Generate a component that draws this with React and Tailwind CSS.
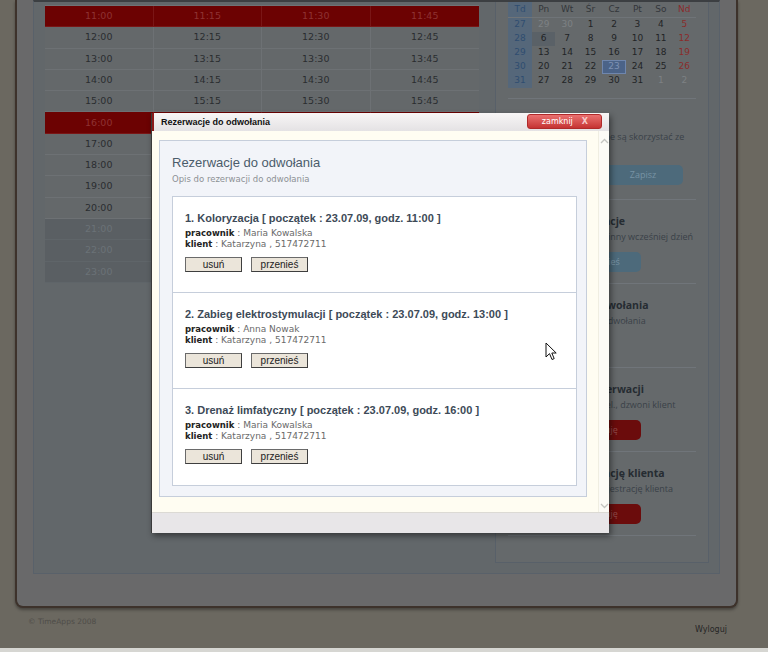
import React from 'react';

const rows = [
  { h: '11', k: 'red' },
  { h: '12', k: 'n' },
  { h: '13', k: 'n' },
  { h: '14', k: 'n' },
  { h: '15', k: 'n' },
  { h: '16', k: 'red' },
  { h: '17', k: 'n' },
  { h: '18', k: 'n' },
  { h: '19', k: 'n' },
  { h: '20', k: 'n' },
  { h: '21', k: 'g' },
  { h: '22', k: 'g' },
  { h: '23', k: 'g' },
];

const rowCls = {
  red: 'border-[#7a1616] bg-[#6c0202] text-[#8e3232]',
  n: 'border-[#6d7174] bg-[#64686a] text-[#2a2d30]',
  g: 'border-[#5f6569] bg-[#5a5f63] text-[#6b7277]',
};

const weeks = [
  { w: 27, d: [['29', 'o'], ['30', 'o'], ['1'], ['2'], ['3'], ['4'], ['5']] },
  { w: 28, d: [['6', 'sel'], ['7'], ['8'], ['9'], ['10'], ['11'], ['12']] },
  { w: 29, d: [['13'], ['14'], ['15'], ['16'], ['17'], ['18'], ['19']] },
  { w: 30, d: [['20'], ['21'], ['22'], ['23', 'today'], ['24'], ['25'], ['26']] },
  { w: 31, d: [['27'], ['28'], ['29'], ['30'], ['31'], ['1', 'o'], ['2', 'o']] },
];

const items = [
  { n: '1. Koloryzacja', time: '11:00', prac: 'Maria Kowalska' },
  { n: '2. Zabieg elektrostymulacji', time: '13:00', prac: 'Anna Nowak' },
  { n: '3. Drenaż limfatyczny', time: '16:00', prac: 'Maria Kowalska' },
];

function Calendar() {
  const heads = ['Pn', 'Wt', 'Śr', 'Cz', 'Pt', 'So', 'Nd'];
  return (
    <div className="grid w-[188px] grid-cols-[24px_repeat(7,1fr)] font-['DejaVu_Sans',Verdana,sans-serif] text-[9px] text-[#222426]">
      <div className="flex h-[16px] items-center justify-center border-b border-[#6f7478] bg-[#55677a] text-[#2f4d70]">Td</div>
      {heads.map((h, i) => (
        <div
          key={h}
          className={`flex h-[16px] items-center justify-center border-b border-[#6f7478] ${i === 6 ? 'text-[#8a2c2c]' : 'text-[#33363a]'}`}
        >
          {h}
        </div>
      ))}
      {weeks.map((wk) => (
        <React.Fragment key={wk.w}>
          <div className="flex h-[14px] items-center justify-center bg-[#55677a] text-[#2f4d70]">{wk.w}</div>
          {wk.d.map(([d, t], i) => {
            let cls = 'text-[#222426]';
            if (i === 6) cls = 'text-[#8a2c2c]';
            if (t === 'o') cls = 'text-[#7d8184]';
            if (t === 'sel') cls = 'bg-[#5a6167] text-[#222426]';
            if (t === 'today') cls = 'border border-[#6f86ad] bg-[#4b6388] text-[#7e92b4]';
            return (
              <div key={i} className={`flex h-[14px] items-center justify-center ${cls}`}>
                {d}
              </div>
            );
          })}
        </React.Fragment>
      ))}
    </div>
  );
}

function Section({ title, children }) {
  return (
    <div className="border-b border-[#70757a] pb-[11px] pt-[14px]">
      <div className="whitespace-nowrap text-[10.5px] font-bold leading-[14px] text-[#262c32]">{title}</div>
      {children}
    </div>
  );
}

function Desc({ children }) {
  return <div className="mt-[2px] whitespace-nowrap text-[9px] leading-[14px] text-[#3a4148]">{children}</div>;
}

function SideBtn({ red, children }) {
  return (
    <div
      className={`mx-auto mt-[8px] flex h-[20px] w-[78px] items-center justify-center rounded-[5px] text-[9px] ${red ? 'bg-[#6b0c0c] text-[#8f4a4a]' : 'bg-[#4d6a7b] text-[#7893a4]'}`}
    >
      {children}
    </div>
  );
}

function GreyBtn({ children }) {
  return (
    <div className="flex h-[15px] w-[57px] items-center justify-center border border-[#6a6a6a] border-b-[#3e3e3e] border-r-[#3e3e3e] bg-[#ebe5da] font-['Liberation_Sans',Arial,sans-serif] text-[10px] text-[#222]">
      {children}
    </div>
  );
}

function Chevron({ up }) {
  return (
    <svg width="9" height="6" viewBox="0 0 9 6">
      <path d={up ? 'M1 5 L4.5 1.5 L8 5' : 'M1 1 L4.5 4.5 L8 1'} fill="none" stroke="#c4c4c0" strokeWidth="1.3" />
    </svg>
  );
}

export default function App() {
  return (
    <div className="relative flex h-[652px] w-[768px] flex-col overflow-hidden bg-[#6b6860] font-['DejaVu_Sans',Verdana,sans-serif]">
      {/* outer frame */}
      <div className="ml-[15px] h-[608px] w-[723px] shrink-0 rounded-b-[8px] border-x-2 border-b-2 border-[#3d322b] bg-[#69696a] px-[16px] shadow-[0_2px_3px_rgba(0,0,0,0.35)]">
        <div className="flex h-[574px] border-x border-b border-[#59616a] border-t-2 border-t-[#3c3f42] bg-[#62676a] pl-[11px]">
          {/* left column: time table */}
          <div className="w-[434px] pt-[3px]">
            <div className="border-t border-[#6f7376]">
              {rows.map((r) => (
                <div key={r.h} className={`grid h-[21.3px] grid-cols-4 border-b ${rowCls[r.k]}`}>
                  {['00', '15', '30', '45'].map((m, j) => (
                    <div
                      key={m}
                      className={`flex items-center justify-center text-[9.5px] ${j < 3 ? (r.k === 'red' ? 'border-r border-[#7a1616]' : 'border-r border-[#6d7174]') : ''}`}
                    >
                      {r.h}:{m}
                    </div>
                  ))}
                </div>
              ))}
            </div>
          </div>

          {/* right sidebar */}
          <div className="ml-[16px] flex h-[561px] w-[214px] flex-col border-x border-b border-[#586069] bg-[#65696b] px-[12px] font-['Open_Sans',sans-serif]">
            <Calendar />
            <div className="mt-[10px] border-b border-[#70757a]" />
            <div className="border-b border-[#70757a] pb-[14px] pt-[14px]">
              <div className="whitespace-nowrap text-[10.5px] font-bold leading-[14px] text-[#262c32]">Nowa rezerwacja</div>
              <div className="mt-[2px] whitespace-nowrap text-[9px] leading-[15px] text-[#3a4148]">
                Osoby, które już zapisane są skorzystać ze
                <br />
                zniżki.
              </div>
              <div className="mt-[6px] flex items-center">
                <div className="h-[18px] w-[80px] border border-[#70757a] bg-[#6a6e70]" />
                <div className="ml-auto mr-[13px] flex h-[20px] w-[80px] items-center justify-center rounded-[5px] bg-[#4d6a7b] text-[9px] text-[#7893a4]">
                  Zapisz
                </div>
              </div>
            </div>
            <Section title="Przełożone rezerwacje">
              <Desc>Zmień termin wizyty na inny wcześniej dzień</Desc>
              <SideBtn>Przenieś</SideBtn>
            </Section>
            <Section title="Rezerwacje – do odwołania">
              <Desc>Lista rezerwacji już do odwołania</Desc>
              <div className="mt-[8px] h-[20px] text-[9px] leading-[20px] text-[#3a4148]">» pokaż</div>
            </Section>
            <Section title="Anulowanie tej rezerwacji">
              <Desc>Odwołanie rezerwacji: tel., dzwoni klient</Desc>
              <SideBtn red>Anuluję</SideBtn>
            </Section>
            <Section title="Zaakceptuj rejestrację klienta">
              <Desc>Możesz też anulować rejestrację klienta</Desc>
              <SideBtn red>Anuluję</SideBtn>
            </Section>
          </div>
        </div>
      </div>

      {/* footer */}
      <div className="flex h-[40px] shrink-0 justify-between">
        <div className="ml-[28px] mt-[9px] text-[7.5px] leading-[10px] text-[#4f4d49]">© TimeApps 2008</div>
        <div className="mr-[41px] mt-[17px] text-[8px] leading-[10px] text-[#262626]">Wyloguj</div>
      </div>
      <div className="h-[4px] shrink-0 bg-[#d6d6d2]" />

      {/* modal */}
      <div className="absolute left-[151px] top-[113px] flex h-[420px] w-[458px] flex-col border-l border-[#3a3a3a] bg-[#fffdf2] shadow-[2px_3px_6px_rgba(0,0,0,0.45)]">
        <div className="flex h-[18px] shrink-0 items-start justify-between border-l-2 border-[#8a1a1a] bg-gradient-to-b from-[#f8f6f6] to-[#e4e2e4] pl-[7px]">
          <div className="font-['Liberation_Sans',Arial,sans-serif] text-[9px] font-bold leading-[18px] text-[#111]">Rezerwacje do odwołania</div>
          <div className="mr-[7px] mt-[1px] flex h-[15px] w-[75px] items-center justify-end gap-[9px] rounded-[3px] border border-[#b02a2a] bg-gradient-to-b from-[#ea7070] to-[#c53232] pr-[13px] text-[8px] text-white">
            <span>zamknij</span>
            <span className="font-bold text-[#f5caca]">X</span>
          </div>
        </div>
        <div className="flex min-h-0 flex-1">
          <div className="flex-1 pl-[7px] pt-[9px]">
            <div className="h-[357px] w-[428px] border border-[#c6cedb] bg-[#f2f4f9] pl-[12px] pr-[9px] pt-[14px]">
              <div className="font-['Liberation_Sans',Arial,sans-serif] text-[13px] leading-[16px] text-[#4b5c6b]">Rezerwacje do odwołania</div>
              <div className="mt-[3px] text-[8.5px] leading-[11px] text-[#8d9195]">Opis do rezerwacji do odwołania</div>
              <div className="mt-[11px] w-[405px] border border-[#c6cedb] bg-white">
                {items.map((it, i) => (
                  <div key={i} className={`h-[96px] pl-[12px] pt-[14px] ${i < 2 ? 'border-b border-[#c6cedb]' : ''}`}>
                    <div className="font-['Liberation_Sans',Arial,sans-serif] text-[11px] font-bold leading-[14px] text-[#3d4a57]">
                      {it.n} [ początek : 23.07.09, godz. {it.time} ]
                    </div>
                    <div className="mt-[3px] text-[9px] leading-[11px] text-[#6a6a6a]">
                      <span className="text-[8.5px] font-bold text-[#222]">pracownik</span> : {it.prac}
                    </div>
                    <div className="text-[9px] leading-[11px] text-[#6a6a6a]">
                      <span className="text-[8.5px] font-bold text-[#222]">klient</span> : Katarzyna , 517472711
                    </div>
                    <div className="mt-[7px] flex gap-[9px]">
                      <GreyBtn>usuń</GreyBtn>
                      <GreyBtn>przenieś</GreyBtn>
                    </div>
                  </div>
                ))}
              </div>
            </div>
          </div>
          <div className="flex w-[11px] flex-col items-center justify-between border-l border-[#f0eee2] bg-[#fcfbf6] pb-[3px] pt-[7px]">
            <Chevron up />
            <Chevron />
          </div>
        </div>
        <div className="h-[21px] shrink-0 border-t border-[#dcdad4] bg-[#e8e6e8]" />
      </div>

      {/* mouse cursor */}
      <svg className="absolute left-[545px] top-[342px]" width="13" height="19" viewBox="0 0 13 19">
        <path d="M1 1 L1 15 L4.5 11.6 L7 17.5 L9.2 16.6 L6.8 11 L11.2 11 Z" fill="#fff" stroke="#111" strokeWidth="1" strokeLinejoin="round" />
      </svg>
    </div>
  );
}
